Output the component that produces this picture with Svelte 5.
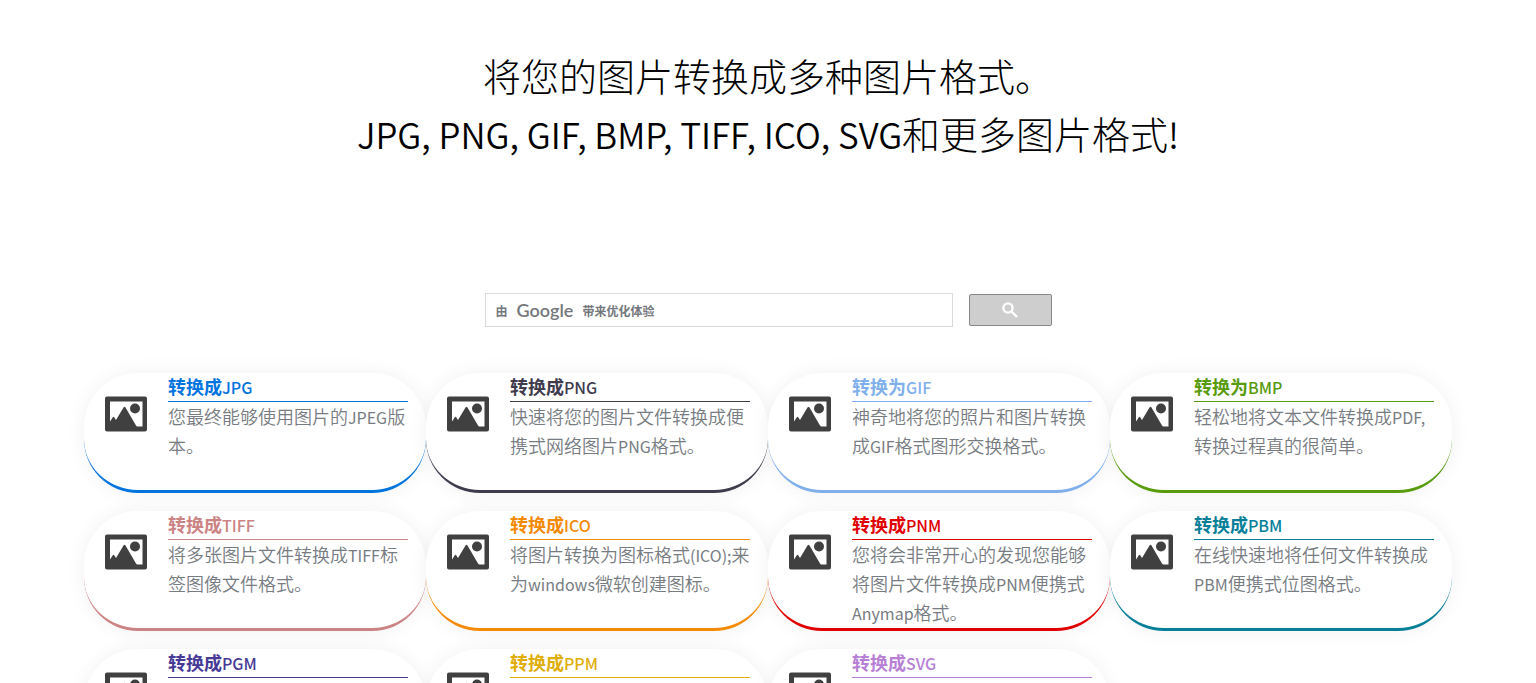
<script lang="ts">
  const formats = [
    { verb: "转换成", name: "JPG", color: "#0074de", text: "您最终能够使用图片的JPEG版本。" },
    { verb: "转换成", name: "PNG", color: "#3f3b4d", text: "快速将您的图片文件转换成便携式网络图片PNG格式。" },
    { verb: "转换为", name: "GIF", color: "#80b0ec", text: "神奇地将您的照片和图片转换成GIF格式图形交换格式。" },
    { verb: "转换为", name: "BMP", color: "#589b0c", text: "轻松地将文本文件转换成PDF,转换过程真的很简单。" },
    { verb: "转换成", name: "TIFF", color: "#cc8383", text: "将多张图片文件转换成TIFF标签图像文件格式。" },
    { verb: "转换成", name: "ICO", color: "#f48a05", text: "将图片转换为图标格式(ICO);来为windows微软创建图标。" },
    { verb: "转换成", name: "PNM", color: "#e00000", text: "您将会非常开心的发现您能够将图片文件转换成PNM便携式Anymap格式。" },
    { verb: "转换成", name: "PBM", color: "#087f99", text: "在线快速地将任何文件转换成PBM便携式位图格式。" },
    { verb: "转换成", name: "PGM", color: "#463a96", text: "将图片文件转换成PGM便携式灰度图格式。" },
    { verb: "转换成", name: "PPM", color: "#dfae0b", text: "将图片文件转换成PPM便携式像素图格式。" },
    { verb: "转换成", name: "SVG", color: "#b77fd5", text: "将图片文件转换成SVG可缩放矢量图格式。" },
  ];

  // odd parts are the latin runs
  const split = (text: string) => text.split(/([\x21-\x7e]+)/);

  let query = $state("");
</script>

<main>
  <h1>
    将您的图片转换成多种图片格式。<br />
    <span>JPG, PNG, GIF, BMP, TIFF, ICO, SVG</span>和更多图片格式<span>!</span>
  </h1>

  <form class="search" onsubmit={(e) => e.preventDefault()}>
    <div class="field">
      <input id="query" type="text" autocomplete="off" bind:value={query} />
      {#if !query}
        <label for="query">由<span class="google">Google</span>带来优化体验</label>
      {/if}
    </div>
    <button type="submit" aria-label="搜索">
      <svg viewBox="0 0 16 16" width="16" height="16">
        <circle cx="6" cy="6" r="4.6" />
        <path d="M9.5 9.5 15 15" />
      </svg>
    </button>
  </form>

  <div class="cards">
    {#each formats as format}
      <a class="card" href="#{format.name.toLowerCase()}" style="--accent: {format.color}">
        <svg class="picture" viewBox="0 0 42 36" width="42" height="36">
          <path
            fill-rule="evenodd"
            d="M2 .5h38a2 2 0 0 1 2 2v31a2 2 0 0 1-2 2H2a2 2 0 0 1-2-2v-31a2 2 0 0 1 2-2zM5 5.500v20l3-4.500q.5-.7 1 0l2 3L18.500 11.500q1-1.500 2 0L31 29.500q.6 1 1.500 1H37.500V5.500z"
          />
          <circle cx="30" cy="12.500" r="5" />
        </svg>
        <div class="info">
          <h2>{format.verb}<span>{format.name}</span></h2>
          <p>
            {#each split(format.text) as part, i}{#if i % 2}<span>{part}</span>{:else}{part}{/if}{/each}
          </p>
        </div>
      </a>
    {/each}
  </div>
</main>

<style>
  :global(body) {
    margin: 0;
    background: #fff;
    font-family: "Noto Sans CJK SC", sans-serif;
  }

  main {
    padding: 46px 84px;
  }

  h1 {
    margin: 0;
    font-size: 38px;
    line-height: 58px;
    font-weight: 300;
    text-align: center;
    color: #000;
  }

  h1 span {
    font-size: 35px;
    line-height: 1;
    font-weight: 350;
  }

  .search {
    display: flex;
    justify-content: center;
    align-items: center;
    gap: 16px;
    margin: 131px 0 46px;
  }

  .field {
    position: relative;
    width: 468px;
  }

  .field input {
    display: block;
    box-sizing: border-box;
    width: 100%;
    height: 34px;
    padding: 0 10px;
    border: 1px solid #d9d9d9;
    font-size: 16px;
    background: #fff;
  }

  .field label {
    position: absolute;
    inset: 0 auto 0 11px;
    display: flex;
    align-items: center;
    gap: 9px;
    font-size: 12px;
    font-weight: 700;
    color: #74777b;
    pointer-events: none;
  }

  .google {
    font-family: Lato, sans-serif;
    font-size: 18px;
    font-weight: 600;
  }

  button {
    display: flex;
    justify-content: center;
    align-items: center;
    width: 83px;
    height: 32px;
    padding: 0;
    border: 1px solid #888;
    border-radius: 2px;
    background: #cecece;
    cursor: pointer;
  }

  button svg {
    fill: none;
    stroke: #fff;
    stroke-width: 2.4;
  }

  .cards {
    display: grid;
    grid-template-columns: repeat(auto-fill, minmax(320px, 1fr));
    row-gap: 18px;
  }

  .card {
    display: flex;
    gap: 21px;
    box-sizing: border-box;
    min-height: 120px;
    padding: 0 18px 0 21px;
    border-bottom: 3px solid var(--accent);
    border-radius: 54px;
    box-shadow: 0 0 20px rgba(0, 0, 0, 0.06);
    background: #fff;
    text-decoration: none;
  }

  .picture {
    flex: none;
    margin-top: 23px;
    fill: #404040;
  }

  .info {
    flex: 1;
    min-width: 0;
  }

  h2,
  p {
    margin: 0;
    font-size: 18px;
    line-height: 29px;
  }

  h2 {
    padding-bottom: 2px;
    border-bottom: 1px solid var(--accent);
    line-height: 26px;
    font-weight: 700;
    color: var(--accent);
  }

  h2 span {
    font-size: 16px;
    line-height: 1;
    font-weight: 500;
  }

  p {
    font-weight: 350;
    color: #777c82;
  }

  p span {
    font-size: 16px;
    line-height: 1;
    font-weight: 400;
  }
</style>
